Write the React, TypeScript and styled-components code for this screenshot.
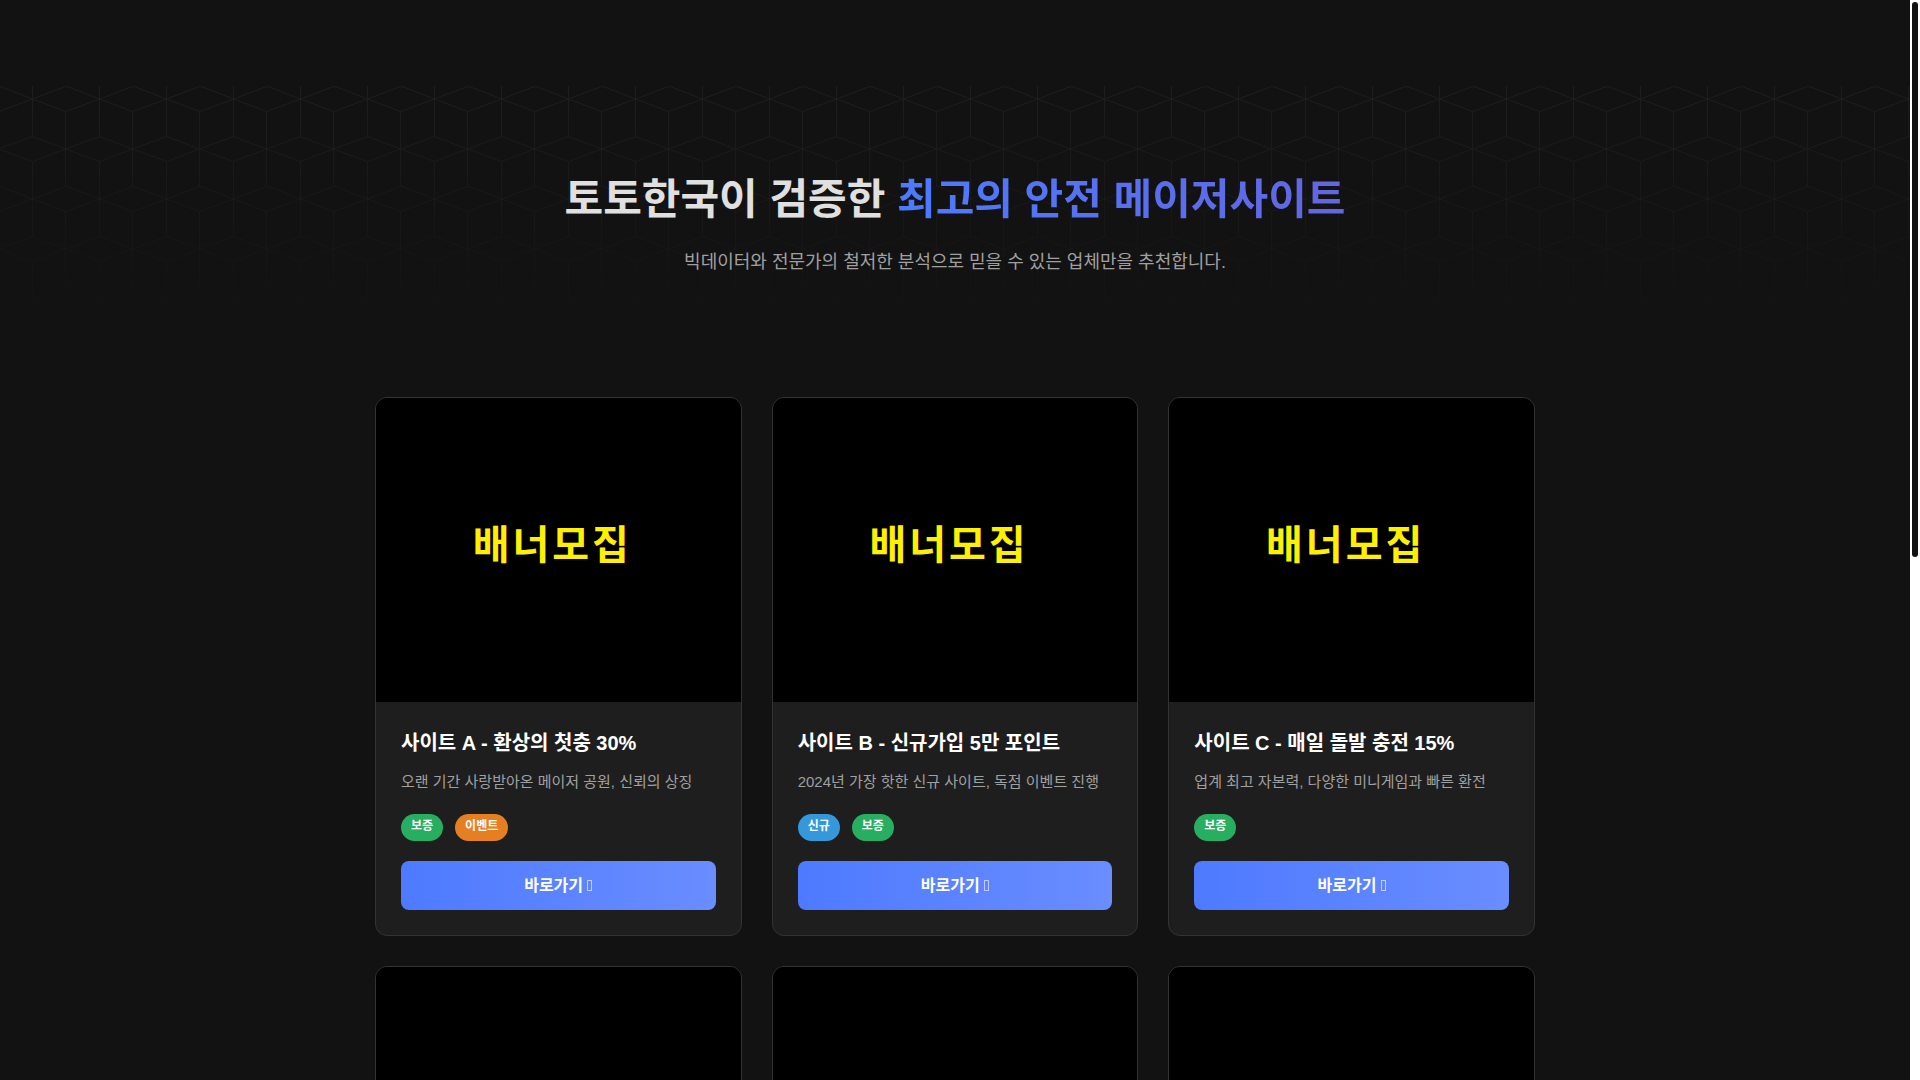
import React from "react";
import styled, { createGlobalStyle } from "styled-components";

const GlobalStyle = createGlobalStyle`
  * { box-sizing: border-box; margin: 0; padding: 0; }
  body {
    background: #121212;
    color: #e0e0e0;
    font-family: "Liberation Sans", "Noto Sans CJK KR", sans-serif;
  }
`;

const Shell = styled.div`
  display: grid;
  grid-template-columns: minmax(0, 1fr) 10px;
  height: 100vh;
  overflow: hidden;
`;

const Page = styled.main`
  overflow-y: auto;
  scrollbar-width: none;
`;

const ScrollTrack = styled.div`
  padding: 2px;
  background: #ffffff;
`;

const ScrollThumb = styled.div`
  height: 555px;
  border-radius: 3px;
  background: #121212;
`;

const Hero = styled.section`
  position: relative;
  margin-top: 86px;
  padding: 82px 20px 70px;
  text-align: center;
`;

const HeroPattern = styled.svg`
  position: absolute;
  inset: 0;
  width: 100%;
  height: 250px;
`;

const HeroTitle = styled.h1`
  position: relative;
  margin-bottom: 15px;
  color: #e0e0e0;
  font-size: 42px;
  line-height: 64px;
`;

const Accent = styled.span`
  background: linear-gradient(90deg, #4d7aff, #6366e0);
  background-clip: text;
  -webkit-background-clip: text;
  color: transparent;
`;

const HeroText = styled.p`
  position: relative;
  color: #a0a0a0;
  font-size: 18px;
  line-height: 30px;
`;

const Cards = styled.section`
  display: grid;
  grid-template-columns: repeat(3, minmax(0, 1fr));
  gap: 30px;
  max-width: 1200px;
  margin: 0 auto;
  padding: 50px 20px 80px;
`;

const Card = styled.article`
  overflow: hidden;
  border: 1px solid #333333;
  border-radius: 12px;
  background: #1e1e1e;
`;

const Banner = styled.div`
  display: flex;
  align-items: center;
  justify-content: center;
  aspect-ratio: 6 / 5;
  padding: 0 12px 16px 0;
  background: #000000;
  color: #fff000;
  font-size: 40px;
  font-weight: 700;
  letter-spacing: 3px;
`;

const CardBody = styled.div`
  padding: 25px;
`;

const CardTitle = styled.h3`
  margin-bottom: 10px;
  color: #ffffff;
  font-size: 20px;
  line-height: 32px;
`;

const CardText = styled.p`
  margin-bottom: 20px;
  color: #a0a0a0;
  font-size: 15px;
  line-height: 25px;
`;

const Tags = styled.div`
  display: flex;
  gap: 12px;
  margin-bottom: 20px;
`;

const tagColors = { "보증": "#27ae60", "이벤트": "#e67e22", "신규": "#3498db" };
type TagName = keyof typeof tagColors;

const Tag = styled.span<{ $color: string }>`
  padding: 1px 10px 4px;
  border-radius: 20px;
  background: ${(p) => p.$color};
  color: #ffffff;
  font-size: 12px;
  font-weight: 700;
  line-height: 22px;
`;

const GoLink = styled.a`
  display: block;
  padding: 12px;
  border-radius: 8px;
  background: linear-gradient(90deg, #4d7aff, #6a8dff);
  color: #ffffff;
  font-size: 16px;
  font-weight: 700;
  line-height: 25px;
  text-align: center;
  text-decoration: none;
`;

const BoxIcon = styled.i`
  display: inline-block;
  width: 5px;
  height: 11px;
  border: 1px solid rgba(255, 255, 255, 0.6);
`;

type Site = { title: string; text: string; tags: TagName[] };

const sites: Site[] = [
  { title: "사이트 A - 환상의 첫충 30%", text: "오랜 기간 사랑받아온 메이저 공원, 신뢰의 상징", tags: ["보증", "이벤트"] },
  { title: "사이트 B - 신규가입 5만 포인트", text: "2024년 가장 핫한 신규 사이트, 독점 이벤트 진행", tags: ["신규", "보증"] },
  { title: "사이트 C - 매일 돌발 충전 15%", text: "업계 최고 자본력, 다양한 미니게임과 빠른 환전", tags: ["보증"] },
];

function SiteCard({ site }: { site?: Site }) {
  return (
    <Card>
      <Banner>{site ? "배너모집" : null}</Banner>
      {site && (
        <CardBody>
          <CardTitle>{site.title}</CardTitle>
          <CardText>{site.text}</CardText>
          <Tags>
            {site.tags.map((t) => (
              <Tag key={t} $color={tagColors[t]}>{t}</Tag>
            ))}
          </Tags>
          <GoLink href="#">
            바로가기 <BoxIcon aria-hidden="true" />
          </GoLink>
        </CardBody>
      )}
    </Card>
  );
}

export default function App() {
  return (
    <>
      <GlobalStyle />
      <Shell>
        <Page>
          <Hero>
            <HeroPattern aria-hidden="true">
              <defs>
                <pattern id="cubes" width="67" height="100" patternUnits="userSpaceOnUse">
                  <path
                    d="M-1 0 L32.5 13 L65.5 0.5 L99 13 M-1 25.5 L32.5 13 L65.5 25.5 L99 13 M32.5 0 V50 M65.5 25 V100 M32.5 75 V100 M-1.5 63 L32.5 50.5 L65.5 63 L99 50.5 M-1.5 63 L32.5 75.5 L65.5 63 L99 75.5"
                    fill="none"
                    stroke="#1e1e1e"
                  />
                </pattern>
                <linearGradient id="fade" x1="0" y1="0" x2="0" y2="1">
                  <stop offset="0" stopColor="#fff" />
                  <stop offset="1" stopColor="#fff" stopOpacity="0" />
                </linearGradient>
                <mask id="fadeMask">
                  <rect width="100%" height="100%" fill="url(#fade)" />
                </mask>
              </defs>
              <rect width="100%" height="100%" fill="url(#cubes)" mask="url(#fadeMask)" />
            </HeroPattern>
            <HeroTitle>
              토토한국이 검증한 <Accent>최고의 안전 메이저사이트</Accent>
            </HeroTitle>
            <HeroText>빅데이터와 전문가의 철저한 분석으로 믿을 수 있는 업체만을 추천합니다.</HeroText>
          </Hero>
          <Cards>
            {sites.map((s) => (
              <SiteCard key={s.title} site={s} />
            ))}
            <SiteCard />
            <SiteCard />
            <SiteCard />
          </Cards>
        </Page>
        <ScrollTrack aria-hidden="true">
          <ScrollThumb />
        </ScrollTrack>
      </Shell>
    </>
  );
}
